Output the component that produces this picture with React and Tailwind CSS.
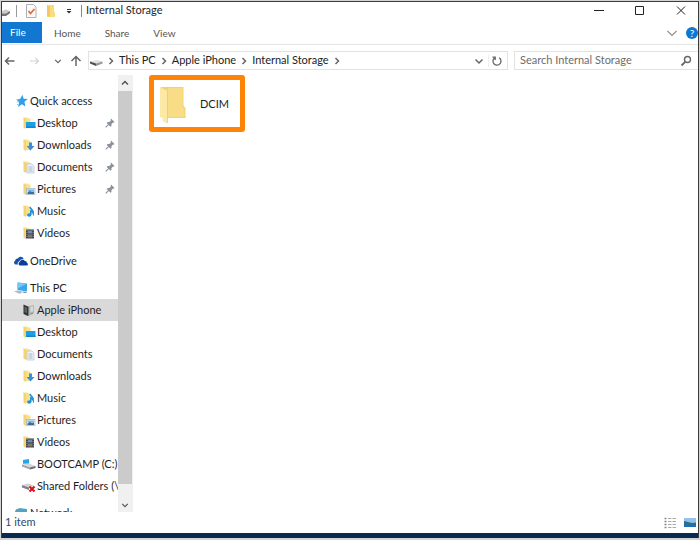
import { useState } from 'react';

const FolderBase = ({ children }) => (
  <svg className="h-3.5 w-3.5 shrink-0" viewBox="0 0 14 14" fill="none">
    <path d="M1.500 1.500h4l1 1h2v9.500H3z" fill="#fbe08a" />
    <path d="M1.500 1.500 4 3v10l-2.500-1.500z" fill="#f5d272" />
    {children}
  </svg>
);

const DesktopIcon = () => (
  <FolderBase>
    <rect x="4" y="6" width="9.500" height="6" fill="#1a9fe9" />
    <path d="M4 10.500h9.500v1.500H4z" fill="#1287cf" />
  </FolderBase>
);

const DownloadsIcon = () => (
  <FolderBase>
    <path d="M7 4.500h3v3.500h2.500L8.500 12.500 4.500 8H7z" fill="#3a8fd6" />
  </FolderBase>
);

const DocumentsIcon = () => (
  <FolderBase>
    <path d="M5 4h5l2 2v7H5z" fill="#eef3f8" stroke="#b4bec8" strokeWidth=".7" />
    <path d="M6.500 7h4M6.500 9h4M6.500 11h4" stroke="#8fabc6" strokeWidth=".8" />
  </FolderBase>
);

const PicturesIcon = () => (
  <FolderBase>
    <rect x="4.500" y="6.500" width="8.500" height="6" fill="#e8f2fb" stroke="#9fb0c0" strokeWidth=".7" />
    <path d="M5.500 7.500h6.500v2h-6.500z" fill="#7ab4e4" />
    <path d="M5.500 10.500l2.500-1.500 2 1 2-.5v2.500H5.500z" fill="#3b6e99" />
  </FolderBase>
);

const MusicIcon = () => (
  <FolderBase>
    <path d="M8 3c.5 2.500 4 3 3.300 6.500-.5-1.500-1.500-2.200-2.500-2.400v4" stroke="#1c93dd" strokeWidth="1.600" />
    <ellipse cx="7.200" cy="11" rx="2.100" ry="1.800" fill="#1c93dd" />
  </FolderBase>
);

const VideosIcon = () => (
  <FolderBase>
    <rect x="4" y="3.500" width="8" height="9" fill="#3c444e" />
    <path d="M5.800 4.500h4.400v3H5.800z" fill="#6d8dad" />
    <path d="M5.800 8.500h4.400v3H5.800z" fill="#83786a" />
    <path d="M4.900 4v8M11.200 4v8" stroke="#c9ced3" strokeWidth=".6" strokeDasharray="1 1" />
  </FolderBase>
);

const StarIcon = () => (
  <svg className="h-3.5 w-3.5 shrink-0" viewBox="0 0 14 14">
    <path d="M8.500 .8l1.100 4 4.200.3-3.400 2.600 1 4.800-3.500-2.200L4 13l1.200-4.500L2.500 5.400l3.800-.6z" fill="#2e9fe8" />
    <path d="M2.500 5.800h3M2.800 8h2.500M3 10.500h1.500" stroke="#7fc4f2" strokeWidth=".9" />
  </svg>
);

const OneDriveIcon = () => (
  <svg className="h-3.5 w-3.5 shrink-0" viewBox="0 0 14 14">
    <path d="M2 10.500a2 2 0 01-.8-3.800C1.300 5 3 4.200 4 4.600c1-2.400 4.800-2.400 5.600.4-3 0-3.700 1-4.300 2.500C3.500 8 3.500 9.500 3.900 10.500z" fill="#174fae" />
    <path d="M6 11.500a1.900 1.900 0 010-3.700c.2-2.400 3.800-3 4.800-.8 1.500-.1 2 .8 2 1.700 1.600.5 1.400 2.800-.3 2.800z" fill="#0c3f99" />
  </svg>
);

const ThisPCIcon = () => (
  <svg className="h-3.5 w-3.5 shrink-0" viewBox="0 0 14 14">
    <path d="M3.500 1.500l9.500 1v8l-9.500-1.500z" fill="#3aa7e8" />
    <path d="M3.500 1.500l9.500 1-9.500 5z" fill="#72c8f5" />
    <path d="M0 10.300l4-.8 5.500 1.600-4 1.600z" fill="#a9b9c5" />
    <path d="M9 10.500l3.500.4v1.200l-3-.3z" fill="#6c8598" />
  </svg>
);

const PhoneIcon = () => (
  <svg className="h-3.5 w-3.5 shrink-0" viewBox="0 0 14 14">
    <path d="M1.500 1.500l4.500 2v9.500l-4.500-2z" fill="#303436" />
    <path d="M2.500 3.500l2.500 1.200v5.600L2.500 9z" fill="#59655e" />
    <path d="M6 3.500l1.500-.5v9.500L6 13z" fill="#76797b" />
    <path d="M7.500 3L12 2v8.500l-4.500 2z" fill="#b7babc" />
    <path d="M8.500 4l2.500-.6v4.600L8.500 9z" fill="#d9dbdc" />
    <path d="M8.500 10.500l2.500-1v1l-2.500 1z" fill="#5fa968" />
  </svg>
);

const BootcampIcon = () => (
  <svg className="h-3.5 w-3.5 shrink-0" viewBox="0 0 14 14">
    <path d="M0 7.500l7-1 6.500 2.500-5.500 1.500z" fill="#d3d7da" />
    <path d="M0 7.500l8 3v2l-8-3z" fill="#9ba1a5" />
    <path d="M8 10.500L13.500 9v2L8 12.500z" fill="#656c72" />
    <path d="M1 3l6-1v4.500L1 6.700z" fill="#21a5ed" />
  </svg>
);

const SharedIcon = () => (
  <svg className="h-3.5 w-3.5 shrink-0" viewBox="0 0 14 14">
    <path d="M0 6l6-1.500L12 6.500 7 8.500z" fill="#cfd2d4" />
    <path d="M0 6l7 2.500v2.500L0 8.500z" fill="#7d8388" />
    <path d="M7.500 7.500l5 5M12.500 7.500l-5 5" stroke="#d9141b" strokeWidth="2.200" />
  </svg>
);

const NetworkIcon = () => (
  <svg className="h-3.5 w-3.5 shrink-0" viewBox="0 0 14 14">
    <path d="M5 2l8 1v8l-8-1z" fill="#4ba6c9" />
    <circle cx="5" cy="6.500" r="4" fill="#5a9fbc" />
    <path d="M2 11.500h10V13H2z" fill="#9fb2bd" />
  </svg>
);

const PinIcon = () => (
  <svg className="h-2.5 w-2.5 shrink-0" viewBox="0 0 10 10">
    <path d="M6 .5L9.500 4l-.8.700-.7-.2-1.600 1.700.1 1.700-.9.900L1.700 4.900l.9-.9 1.700.1 1.600-1.600-.2-.9z" fill="#8b9299" />
    <path d="M3.800 6.300L.7 9.400" stroke="#8b9299" strokeWidth="1.100" />
  </svg>
);

const DriveIcon = () => (
  <svg className="h-3.5 w-3.5 shrink-0" viewBox="0 0 14 14">
    <path d="M1 7.500L8 6l5.500 1.500L7 9.500z" fill="#dfe0e1" />
    <path d="M1 7.500l6 2V12L1 9.500z" fill="#4c5053" />
    <path d="M7 9.500l6.500-2v2L7 12z" fill="#94989b" />
  </svg>
);

const Chevron = ({ d, className }) => (
  <svg className={className} viewBox="0 0 10 10" fill="none" stroke="currentColor" strokeWidth="1.500">
    <path d={d} />
  </svg>
);
const RIGHT = 'M3.500 2L6.500 5 3.500 8';
const DOWN = 'M1.500 3.500L5 7l3.500-3.500';
const UP = 'M2 6.500L5 3.500l3 3';

const Separator = () => <Chevron d={RIGHT} className="mx-[3px] h-2.5 w-2.5 shrink-0 text-[#666]" />;

const quickAccess = [
  { name: 'Desktop', Icon: DesktopIcon, pinned: true },
  { name: 'Downloads', Icon: DownloadsIcon, pinned: true },
  { name: 'Documents', Icon: DocumentsIcon, pinned: true },
  { name: 'Pictures', Icon: PicturesIcon, pinned: true },
  { name: 'Music', Icon: MusicIcon },
  { name: 'Videos', Icon: VideosIcon },
];

const thisPC = [
  { name: 'Apple iPhone', Icon: PhoneIcon },
  { name: 'Desktop', Icon: DesktopIcon },
  { name: 'Documents', Icon: DocumentsIcon },
  { name: 'Downloads', Icon: DownloadsIcon },
  { name: 'Music', Icon: MusicIcon },
  { name: 'Pictures', Icon: PicturesIcon },
  { name: 'Videos', Icon: VideosIcon },
  { name: 'BOOTCAMP (C:)', Icon: BootcampIcon },
  { name: 'Shared Folders (\\', Icon: SharedIcon },
];

const NavRow = ({ name, Icon, pinned, child, selected, onClick }) => (
  <button
    onClick={onClick}
    className={`flex h-[22px] w-full shrink-0 items-center text-left whitespace-nowrap ${
      child ? 'gap-px pl-5' : 'gap-0.5 pl-3'
    } ${selected ? 'bg-[#d9d9d9]' : ''}`}
  >
    <Icon />
    <span className={pinned ? 'flex-1' : ''}>{name}</span>
    {pinned && <span className="pr-[3px]"><PinIcon /></span>}
  </button>
);

const TitleBar = () => (
  <header className="flex h-5 shrink-0 items-center pb-[3px]">
    <svg className="h-3.5 w-2 shrink-0" viewBox="0 0 8 14">
      <path d="M0 7l4-1.500 4 1.500-4 2.500H0z" fill="#c8cacc" />
      <path d="M0 9.500h4L8 7v2.300L4 12H0z" fill="#6f7478" />
    </svg>
    <span className="ml-1.5 h-3 w-px bg-[#999]" />
    <button aria-label="Properties" className="ml-2">
      <svg className="h-4 w-3" viewBox="0 0 12 16" fill="none">
        <path d="M1.500 1.500h7l2.500 2.500v10.500H1.500z" fill="#fbfbfb" stroke="#b0b0b0" />
        <path d="M3.500 8l2 2.500 4-4.500" stroke="#e8642c" strokeWidth="1.700" />
      </svg>
    </button>
    <button aria-label="New folder" className="ml-2">
      <svg className="h-3.5 w-3" viewBox="0 0 12 14">
        <path d="M2 1h7v7h1v5H2z" fill="#fbdc7c" />
        <path d="M2 1l3 1.500V13l-3-1z" fill="#f1ca62" />
      </svg>
    </button>
    <button aria-label="Customize" className="ml-2">
      <svg className="h-2 w-2" viewBox="0 0 8 8">
        <path d="M2 2h4v1H2zM1.500 4h5L4 6.500z" fill="#333" />
      </svg>
    </button>
    <span className="ml-2 h-3 w-px bg-[#8a8a8a]" />
    <h1 className="ml-1 flex-1">Internal Storage</h1>
    <div className="flex items-center gap-[31px] pr-3">
      <button aria-label="Minimize">
        <svg className="h-2.5 w-2.5" viewBox="0 0 10 10"><path d="M0 4.500h10" stroke="#222" /></svg>
      </button>
      <button aria-label="Maximize">
        <svg className="h-2.5 w-2.5" viewBox="0 0 10 10"><path d="M.5 .5h8v8h-8z" fill="none" stroke="#222" /></svg>
      </button>
      <button aria-label="Close">
        <svg className="h-2.5 w-2.5" viewBox="0 0 10 10"><path d="M1 .5l8 8M9 .5l-8 8" stroke="#222" /></svg>
      </button>
    </div>
  </header>
);

const Ribbon = () => (
  <nav className="flex h-[23px] shrink-0 items-stretch border-b border-[#e6e6e6] text-[10px] text-[#555]">
    <button className="mb-px w-10 bg-[#1177d1] pl-2 text-left text-white">File</button>
    <button className="ml-3">Home</button>
    <button className="ml-6">Share</button>
    <button className="ml-6">View</button>
    <div className="ml-auto flex items-center gap-2">
      <button aria-label="Expand ribbon">
        <svg className="h-3 w-3" viewBox="0 0 12 12" fill="none">
          <path d="M1.500 4L6 8.500 10.500 4" stroke="#8f8f8f" strokeWidth="1.200" />
        </svg>
      </button>
      <button aria-label="Help" className="h-3 w-3 rounded-full bg-[#0b78d4] text-[10px] leading-3 text-white">?</button>
    </div>
  </nav>
);

const AddressBar = () => (
  <div className="flex h-[30px] shrink-0 items-center pt-px text-[#666]">
    <button aria-label="Back" className="ml-0.5">
      <svg className="h-3 w-3" viewBox="0 0 12 12" fill="none" stroke="currentColor" strokeWidth="1.500">
        <path d="M10.500 6H1.500M5 2.500L1.500 6 5 9.500" />
      </svg>
    </button>
    <button aria-label="Forward" className="ml-3 text-[#d2d2d2]">
      <svg className="h-3 w-3" viewBox="0 0 12 12" fill="none" stroke="currentColor" strokeWidth="1.200">
        <path d="M2 6h8.500M7.500 3l3 3-3 3" />
      </svg>
    </button>
    <button aria-label="Recent locations" className="ml-3.5">
      <Chevron d={DOWN} className="h-2 w-2" />
    </button>
    <button aria-label="Up" className="ml-2">
      <svg className="h-3 w-3" viewBox="0 0 12 12" fill="none" stroke="currentColor" strokeWidth="1.500">
        <path d="M6 11V2M1.500 6L6 1.500 10.500 6" />
      </svg>
    </button>
    <div className="ml-1.5 flex h-[19px] flex-1 items-center border border-[#e2e2e2] text-[#222]">
      <DriveIcon />
      <Separator />
      <a href="#pc">This PC</a>
      <Separator />
      <a href="#iphone">Apple iPhone</a>
      <Separator />
      <a href="#storage">Internal Storage</a>
      <Separator />
      <button aria-label="Previous locations" className="ml-auto text-[#666]">
        <Chevron d={DOWN} className="h-2.5 w-2.5" />
      </button>
      <button aria-label="Refresh" className="ml-1 border-l border-[#eee] pr-1 pl-0.5 text-[#666]">
        <svg className="h-3 w-3" viewBox="0 0 12 12" fill="none" stroke="currentColor" strokeWidth="1.300">
          <path d="M8.200 2.800A4 4 0 113.500 3M1.500 2.200h2.700V5" />
        </svg>
      </button>
    </div>
    <div className="ml-1.5 flex h-[19px] w-[184px] items-center border border-r-0 border-[#e2e2e2] pr-1.5 pl-[5px]">
      <input
        type="text"
        aria-label="Search"
        placeholder="Search Internal Storage"
        className="min-w-0 flex-1 outline-none placeholder:text-[#6d6d6d]"
      />
      <svg className="h-3 w-3 shrink-0" viewBox="0 0 12 12" fill="none" stroke="#666">
        <circle cx="7.500" cy="4.500" r="3" strokeWidth="1.400" />
        <path d="M5.200 6.800L1.500 10.500" strokeWidth="1.800" />
      </svg>
    </div>
  </div>
);

const ScrollBar = () => (
  <div className="flex w-3.5 shrink-0 flex-col bg-[#cbcbcb]">
    <button aria-label="Scroll up" className="flex h-4 items-center justify-center bg-[#f0f0f0] text-[#555]">
      <Chevron d={UP} className="h-2.5 w-2.5" />
    </button>
    <div className="flex-1" />
    <button aria-label="Scroll down" className="flex h-7 items-end justify-center bg-[#f0f0f0] pb-[3px] text-[#555]">
      <Chevron d={DOWN} className="h-2 w-2" />
    </button>
  </div>
);

export default function App() {
  const [selected, setSelected] = useState('pc-Apple iPhone');

  const row = (group) => (item) => {
    const id = `${group}-${item.name}`;
    return <NavRow key={id} {...item} child selected={selected === id} onClick={() => setSelected(id)} />;
  };

  return (
    <div className="flex h-screen flex-col bg-[#d4d4d4] px-px pt-px pb-0.5 font-['Lato','Open_Sans',sans-serif] text-[11px] text-[#1e1e1e]">
      <div className="flex min-h-0 flex-1 flex-col border-x border-t border-[#3c3c3c] bg-white">
        <TitleBar />
        <Ribbon />
        <AddressBar />

        <div className="flex min-h-0 flex-1">
          <aside className="flex w-[116px] shrink-0 flex-col overflow-hidden pt-[15px]">
            <NavRow name="Quick access" Icon={StarIcon} />
            {quickAccess.map(row('quick'))}
            <div className="mt-1.5 shrink-0">
              <NavRow name="OneDrive" Icon={OneDriveIcon} />
            </div>
            <div className="mt-[5px] shrink-0">
              <NavRow name="This PC" Icon={ThisPCIcon} />
            </div>
            {thisPC.map(row('pc'))}
            <div className="mt-[5px] shrink-0">
              <NavRow name="Network" Icon={NetworkIcon} />
            </div>
          </aside>
          <ScrollBar />
          <main className="flex-1 border-l border-[#f0f0f0] pl-4">
            <button className="flex h-[57px] w-24 items-center gap-3.5 rounded-[3px] border-[5px] border-[#ff8306] pt-0.5 pl-1.5">
              <svg className="h-[38px] w-[26px]" viewBox="0 0 26 38">
                <path d="M1 1h22.500v19l2 2v10H7z" fill="#f4d273" />
                <path d="M8 2h14.500v19l2 2v8H8z" fill="#f8dc86" />
                <path d="M0 1l7.500 4v32.500L3 35.500 2.500 32 0 31z" fill="#fce9a5" />
                <path d="M7.500 5v32" stroke="#eccb6e" strokeWidth=".8" />
              </svg>
              DCIM
            </button>
          </main>
        </div>

        <footer className="flex h-[21px] shrink-0 items-center justify-between pr-0.5 pl-[3px] text-[#2f4a6b]">
          <span>1 item</span>
          <div className="flex items-center gap-2">
            <button aria-label="Details view">
              <svg className="h-3 w-3" viewBox="0 0 12 12" fill="none">
                <path d="M.5 1.500h2M.5 4.500h2M.5 7.500h2M.5 10.500h2" stroke="#888" strokeWidth="1.500" />
                <path d="M4 1.500h3.500M8.500 1.500H12M4 4.500h3.500M8.500 4.500H12M4 7.500h3.500M8.500 7.500H12M4 10.500h3.500M8.500 10.500H12" stroke="#aaa" />
              </svg>
            </button>
            <button aria-label="Large icons view">
              <svg className="h-3 w-3" viewBox="0 0 12 12">
                <path d="M0 1h12v9H0z" fill="#8fc3ee" />
                <path d="M0 4l4 1 4 1 4-.5V10H0z" fill="#2d6e8c" />
                <path d="M0 8h12v2H0z" fill="#1b6fc2" />
              </svg>
            </button>
          </div>
        </footer>
        <div className="h-[5px] shrink-0 bg-[#062a50]" />
      </div>
    </div>
  );
}
